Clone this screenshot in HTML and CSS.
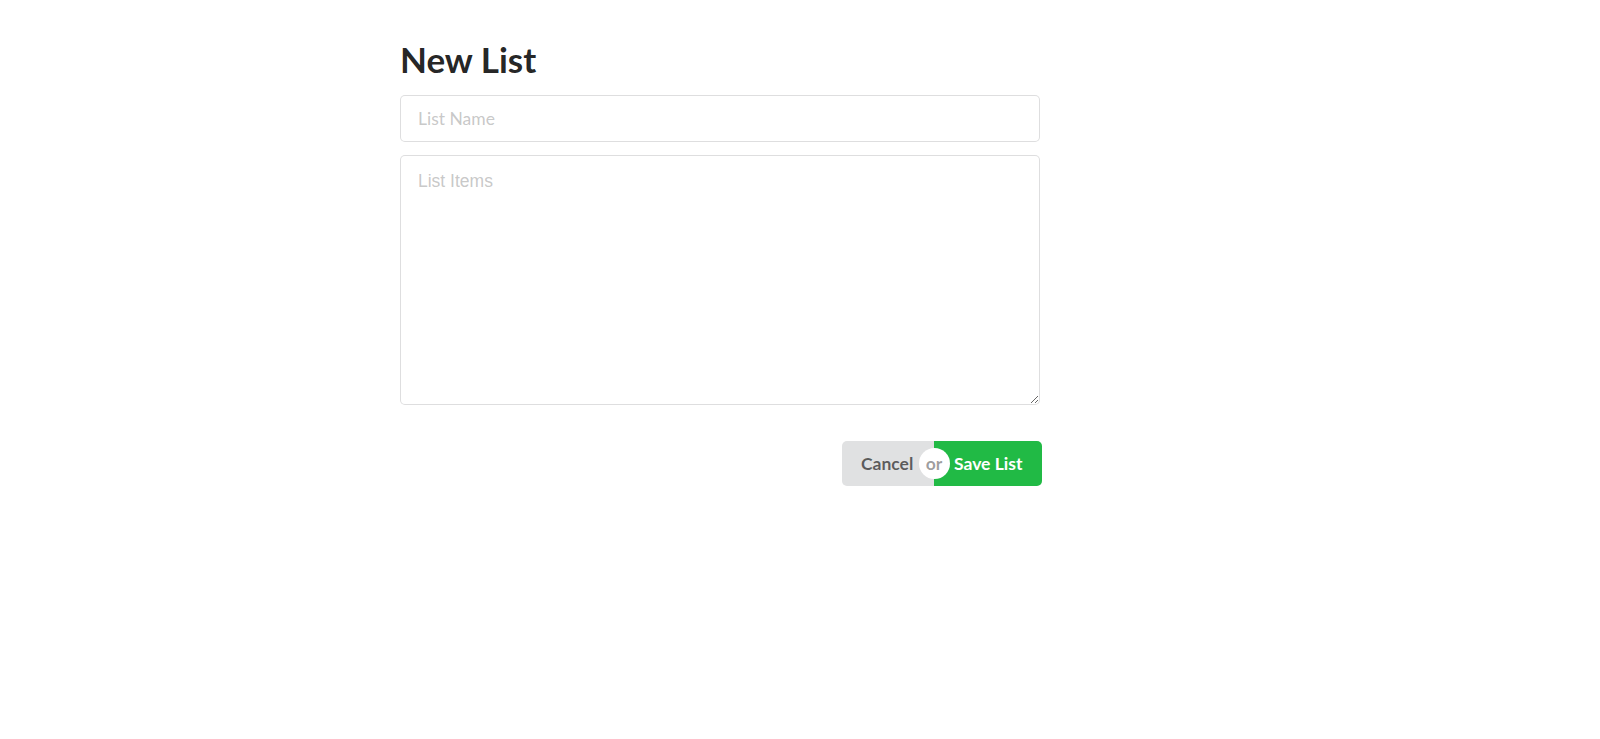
FILE: index.html
```html
<!DOCTYPE html>
<html lang="en">
<head>
<meta charset="utf-8">
<title>New List</title>
<link rel="stylesheet" href="styles.css">
</head>
<body>
<main class="page">
  <form class="list-form">
    <h1 class="form-title">New List</h1>
    <div class="field field-name">
      <input class="text-input" type="text" placeholder="List Name">
    </div>
    <div class="field">
      <textarea class="text-area" placeholder="List Items"></textarea>
    </div>
    <div class="actions">
      <div class="button-group">
        <button type="button" class="btn btn-cancel">Cancel</button>
        <span class="or">or</span>
        <button type="button" class="btn btn-save">Save List</button>
      </div>
    </div>
  </form>
</main>
</body>
</html>
```
FILE: styles.css
```css
* { box-sizing: border-box; }
html, body { margin: 0; padding: 0; background: #fff; }
body {
  font-family: Lato, "Helvetica Neue", Arial, sans-serif;
  font-size: 17.5px;
  color: rgba(0,0,0,.87);
}
.page {
  padding: 37px 0 0 400px;
}
.list-form {
  width: 640px;
}
.form-title {
  margin: 0 0 13px 0;
  font-family: Lato, sans-serif;
  font-weight: 700;
  font-size: 35px;
  line-height: 45px;
  color: rgba(0,0,0,.87);
}
.field { margin-bottom: 14px; }
.field-name { margin-bottom: 13px; }
.text-input {
  display: block;
  width: 100%;
  height: 47px;
  margin: 0;
  padding: 0 17px;
  font-family: Lato, sans-serif;
  font-size: 17.5px;
  color: rgba(0,0,0,.87);
  border: 1px solid rgba(34,36,38,.15);
  border-radius: 5px;
  outline: none;
  background: #fff;
}
.text-input::placeholder { color: rgba(191,191,191,.87); }
.text-area {
  display: block;
  width: 100%;
  height: 250px;
  margin: 0;
  padding: 14px 17px;
  font-family: "Liberation Sans", Arial, sans-serif;
  font-size: 17.5px;
  line-height: 1.2857;
  color: rgba(0,0,0,.87);
  border: 1px solid rgba(34,36,38,.15);
  border-radius: 5px;
  outline: none;
  background: #fff;
  resize: vertical;
}
.text-area::placeholder { color: rgba(191,191,191,.87); }
.actions {
  display: flex;
  justify-content: flex-end;
  margin-top: 36px;
  margin-right: -2px;
}
.button-group {
  position: relative;
  display: flex;
}
.btn {
  height: 45px;
  margin: 0;
  border: none;
  font-family: Lato, sans-serif;
  font-weight: 700;
  font-size: 17.5px;
  line-height: 1;
  cursor: pointer;
}
.btn-cancel {
  width: 92px;
  padding: 0 0 0 19px;
  text-align: left;
  background: #e0e1e2;
  color: rgba(0,0,0,.6);
  border-radius: 5px 0 0 5px;
}
.btn-save {
  width: 108px;
  padding: 0 0 0 20px;
  text-align: left;
  background: #21ba45;
  color: #fff;
  border-radius: 0 5px 5px 0;
}
.or {
  position: absolute;
  left: 92px;
  top: 50%;
  width: 31px;
  height: 31px;
  margin: -15.5px 0 0 -15.5px;
  border-radius: 50%;
  background: #fff;
  color: rgba(0,0,0,.4);
  font-weight: 700;
  font-size: 17.5px;
  line-height: 31px;
  text-align: center;
}
```
